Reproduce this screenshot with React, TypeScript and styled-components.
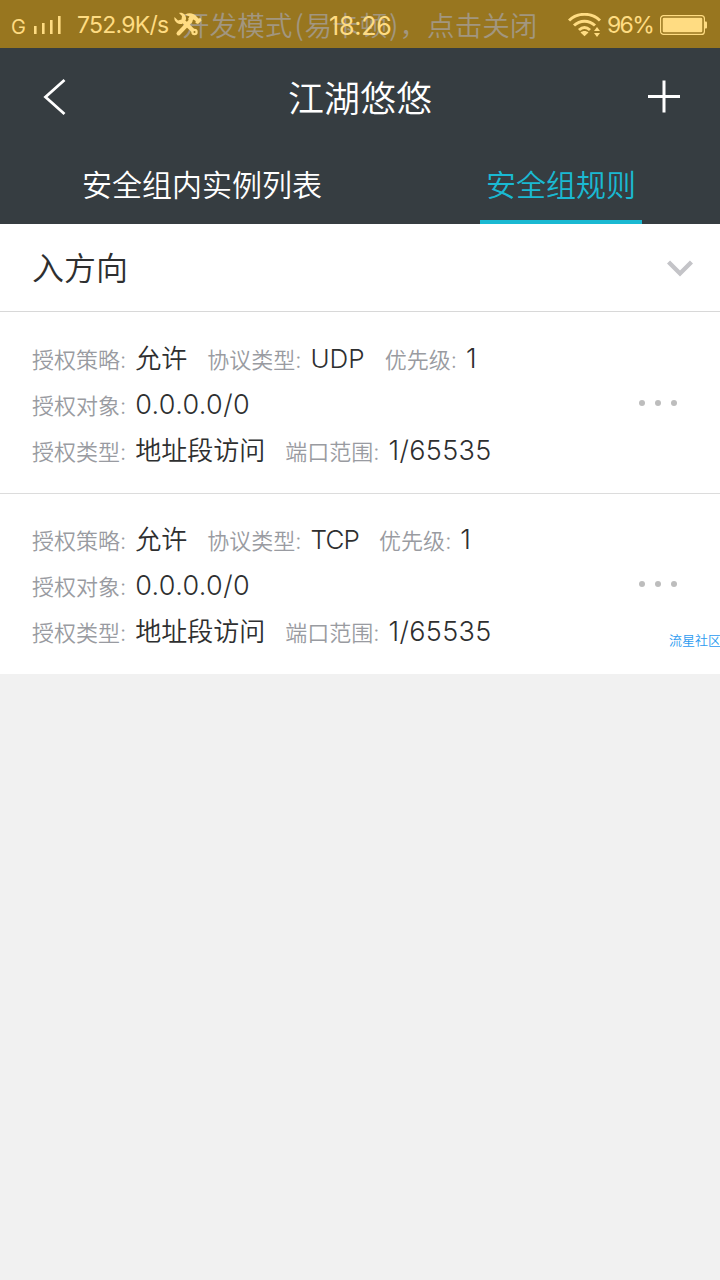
import React from "react";
import styled, { createGlobalStyle } from "styled-components";

const GlobalStyle = createGlobalStyle`
  * { box-sizing: border-box; }
  body {
    margin: 0;
    background: #f1f1f1;
    font-family: Inter, "Noto Sans CJK SC", sans-serif;
    color: #2e2f30;
  }
`;

const Screen = styled.div`
  width: 720px;
  min-height: 1280px;
  position: relative;
  overflow: hidden;
`;

const StatusBar = styled.div`
  position: relative;
  display: flex;
  align-items: center;
  justify-content: space-between;
  height: 48px;
  padding: 1px 12px 0 11px;
  background: #98761f;
  color: #ffdc82;
  font-size: 23px;
  line-height: 46px;
  white-space: nowrap;
`;

const StatusGroup = styled.div`
  display: flex;
  align-items: center;
`;

const Network = styled.span`
  font-size: 20px;
  width: 22px;
  padding-top: 5px;
`;

const Speed = styled.span`
  width: 97px;
  margin-left: 15px;
  padding-top: 1px;
  letter-spacing: -0.75px;
`;

const Percent = styled.span`
  width: 53px;
  margin-left: 6px;
  padding-top: 1px;
  letter-spacing: -1.7px;
`;

const DevNotice = styled.div`
  position: absolute;
  left: 182px;
  top: 0;
  font-family: "Noto Sans CJK SC", sans-serif;
  font-size: 27.6px;
  font-weight: 350;
  line-height: 48px;
  color: #a29680;
`;

const Paren = styled.span`
  padding: 0 1px 0 2px;
`;

const Clock = styled.div`
  position: absolute;
  left: 329px;
  top: 3px;
  font-size: 25px;
  letter-spacing: -0.2px;
  line-height: 47px;
`;

const ToolsIcon = styled.svg`
  position: relative;
  z-index: 1;
`;

const Header = styled.header`
  height: 176px;
  background: #363d41;
  color: #fff;
  display: flex;
  flex-direction: column;
`;

const TitleBar = styled.div`
  height: 98px;
  display: grid;
  grid-template-columns: 76px 1fr 76px;
  align-items: center;
  padding: 0 4px;
`;

const Title = styled.h1`
  margin: 0;
  padding-top: 3px;
  text-align: center;
  font-size: 36px;
  font-weight: 350;
  line-height: 50px;
`;

const IconButton = styled.button<{ $end?: boolean }>`
  display: flex;
  justify-content: ${(p) => (p.$end ? "flex-end" : "flex-start")};
  padding: ${(p) => (p.$end ? "0 35px 0 0" : "0 0 0 38px")};
  border: 0;
  background: none;
  color: inherit;
`;

const Tabs = styled.nav`
  flex: 1;
  display: flex;
  justify-content: space-between;
  padding: 0 78px 0 76px;
`;

const Tab = styled.div<{ $active?: boolean }>`
  padding: 15px 6px 0;
  font-size: 30px;
  line-height: 48px;
  font-weight: 350;
  color: ${(p) => (p.$active ? "#1ab9d2" : "#fff")};
  border-bottom: 4px solid ${(p) => (p.$active ? "#1ab9d2" : "transparent")};
`;

const Section = styled.div`
  height: 88px;
  display: flex;
  align-items: center;
  justify-content: space-between;
  padding: 2px 27px 0 32px;
  background: #fff;
  border-bottom: 1px solid #d8d8d8;
  font-size: 32px;
  line-height: 44px;
  font-weight: 350;
`;

const Rule = styled.div`
  height: 181px;
  display: flex;
  align-items: center;
  justify-content: space-between;
  padding: 0 43px 0 32px;
  background: #fff;

  & + & {
    border-top: 1px solid #dcdcdc;
  }
`;

const Fields = styled.div`
  display: flex;
  flex-direction: column;
  padding-top: 4px;
`;

const Line = styled.div`
  display: flex;
  align-items: baseline;
  height: 46px;
  line-height: 46px;
  white-space: nowrap;
`;

const Label = styled.span`
  font-size: 22px;
  font-weight: 350;
  color: #999ba1;
`;

const Value = styled.span<{ $numeric: boolean; $tracking: number }>`
  margin: 0 20px 0 9px;
  font-size: ${(p) => (p.$numeric ? 27 : 26)}px;
  font-weight: 350;
  letter-spacing: ${(p) => p.$tracking}px;
`;

const Dots = styled.div`
  display: flex;
  gap: 10px;
`;

const Dot = styled.i`
  width: 6px;
  height: 6px;
  border-radius: 50%;
  background: #bdbdbd;
`;

const Watermark = styled.div`
  position: absolute;
  left: 669px;
  top: 631px;
  font-size: 13px;
  font-weight: 350;
  line-height: 18px;
  white-space: nowrap;
  color: #2d9bf0;
`;

type Field = [label: string, value: string, tracking?: number];

const buildRule = (protocol: string, tracking: number): Field[][] => [
  [["授权策略", "允许"], ["协议类型", protocol, tracking], ["优先级", "1"]],
  [["授权对象", "0.0.0.0/0", 0.35]],
  [["授权类型", "地址段访问"], ["端口范围", "1/65535", 0.35]],
];

const rules = [buildRule("UDP", 0), buildRule("TCP", -0.8)];

export default function App() {
  return (
    <Screen>
      <GlobalStyle />
      <StatusBar>
        <DevNotice>
          开发模式<Paren>(</Paren>易卡顿<Paren>)</Paren>，点击关闭
        </DevNotice>
        <StatusGroup>
          <Network>G</Network>
          <svg width="29" height="20" viewBox="0 0 29 20" fill="currentColor">
            <path d="M1 11h2.6v8H1zM9 8h2.6v11H9zM17 5h2.6v14H17zM25 1h2.6v18H25z" />
          </svg>
          <Speed>752.9K/s</Speed>
          <ToolsIcon width="28" height="26" viewBox="0 0 28 26" fill="none" stroke="currentColor">
            <path d="M8 8 20 19.500" strokeWidth="4" />
            <circle cx="20.500" cy="20" r="3.200" fill="currentColor" stroke="none" />
            <path d="M.5 5 4 8.500 7.500 7.500 8 4 5 1C9 0 12.500 3 12 7.500L8 12C4 12.500-.5 9.500.5 5z" fill="currentColor" stroke="none" />
            <path d="M16.500 9 4.500 21.500" strokeWidth="4" strokeLinecap="round" />
            <path d="M11 2.500C15 .5 20 1 23 5l1.500 1.500 2-.5 1 2.500-3.500 3.500-2.500-1 .2-2-2.200-1.500-2.500 2.500-3-3 1.500-2.500z" fill="currentColor" stroke="none" />
            <circle cx="20.500" cy="20" r="1" fill="#98761f" stroke="none" />
          </ToolsIcon>
        </StatusGroup>
        <Clock>18:26</Clock>
        <StatusGroup>
          <svg width="33" height="24" viewBox="0 0 33 24" fill="none" stroke="currentColor" strokeWidth="3">
            <path d="M1 7.5C9-.7 24-.7 32 7.5M6 12.5c6-5.8 15-5.8 21 0M11 17c3.5-3.2 7.5-3.2 11 0" />
            <path d="M12.5 19.5c2-2 6-2 8 0l-4 3.8zM26 18l3-4 3 4zM26 20l3 4 3-4z" fill="currentColor" stroke="none" />
          </svg>
          <Percent>96%</Percent>
          <svg width="48" height="20" viewBox="0 0 48 20">
            <rect x=".6" y=".6" width="43.8" height="18.8" rx="3" fill="none" stroke="currentColor" strokeWidth="1.200" />
            <rect x="2.700" y="2.700" width="39.600" height="14.600" rx="1.200" fill="currentColor" />
            <path d="M45 6.500h1q1 0 1 1v5q0 1-1 1h-1z" fill="currentColor" />
          </svg>
        </StatusGroup>
      </StatusBar>
      <Header>
        <TitleBar>
          <IconButton aria-label="返回">
            <svg width="24" height="38" viewBox="0 0 24 38" fill="none" stroke="currentColor" strokeWidth="2.8">
              <path d="M22.500 2 3.500 19l19 17" />
            </svg>
          </IconButton>
          <Title>江湖悠悠</Title>
          <IconButton $end aria-label="添加">
            <svg width="34" height="34" viewBox="0 0 34 34" fill="none" stroke="currentColor" strokeWidth="3">
              <path d="M1 16.500h32M17 .5v32" />
            </svg>
          </IconButton>
        </TitleBar>
        <Tabs>
          <Tab>安全组内实例列表</Tab>
          <Tab $active>安全组规则</Tab>
        </Tabs>
      </Header>
      <Section>
        <span>入方向</span>
        <svg width="26" height="17" viewBox="0 0 26 17" fill="none" stroke="#c4c4c8" strokeWidth="4.400">
          <path d="m1.500 2 11.500 11.500L24.500 2" />
        </svg>
      </Section>
      {rules.map((lines, i) => (
        <Rule key={i}>
          <Fields>
            {lines.map((fields, j) => (
              <Line key={j}>
                {fields.map(([label, value, tracking = 0]) => (
                  <React.Fragment key={label}>
                    <Label>{label}:</Label>
                    <Value $numeric={/^\d/.test(value)} $tracking={tracking}>
                      {value}
                    </Value>
                  </React.Fragment>
                ))}
              </Line>
            ))}
          </Fields>
          <Dots>
            <Dot />
            <Dot />
            <Dot />
          </Dots>
        </Rule>
      ))}
      <Watermark>流星社区</Watermark>
    </Screen>
  );
}
